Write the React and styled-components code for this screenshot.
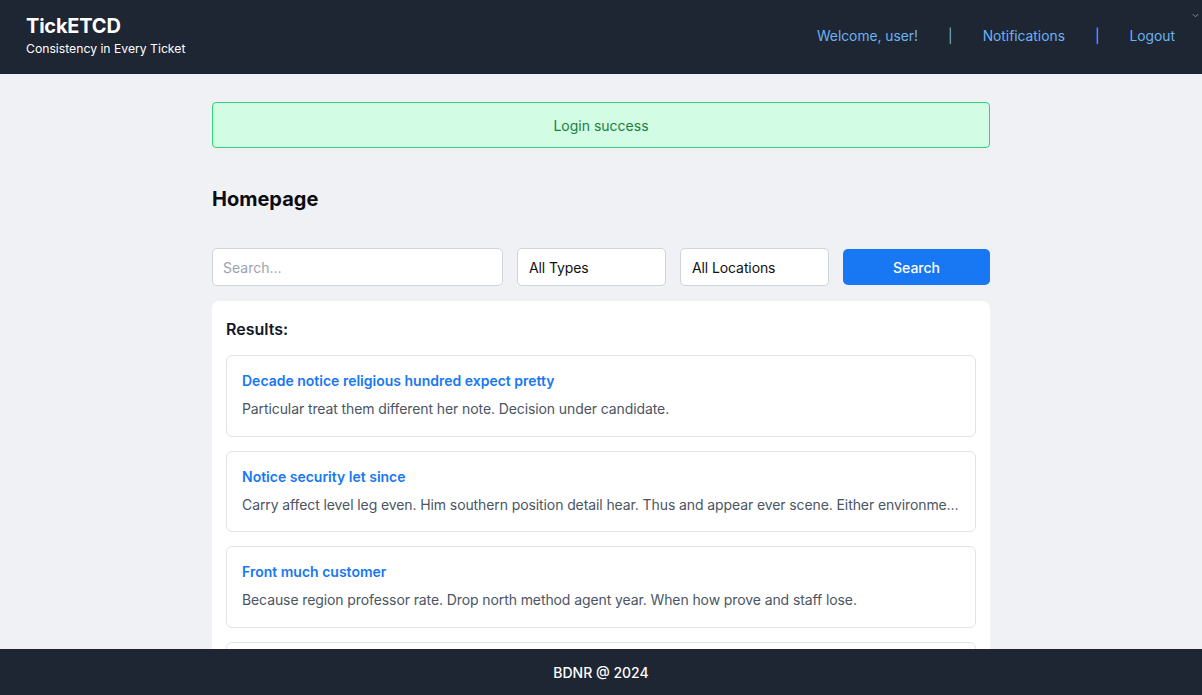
import styled, { createGlobalStyle } from "styled-components";

const GlobalStyle = createGlobalStyle`
  * { box-sizing: border-box; }
  body {
    margin: 0;
    background: #f0f1f5;
    font-family: "Inter", "Liberation Sans", sans-serif;
    color: #111827;
  }
`;

const tickets = [
  {
    title: "Decade notice religious hundred expect pretty",
    description: "Particular treat them different her note. Decision under candidate.",
  },
  {
    title: "Notice security let since",
    description:
      "Carry affect level leg even. Him southern position detail hear. Thus and appear ever scene. Either environment must letter.",
  },
  {
    title: "Front much customer",
    description: "Because region professor rate. Drop north method agent year. When how prove and staff lose.",
  },
  {
    title: "Rather wide message",
    description: "Series about prove. Wonder short listen class.",
  },
];

function App() {
  return (
    <Page>
      <GlobalStyle />
      <Header>
        <Brand>
          <h1>TickETCD</h1>
          <p>Consistency in Every Ticket</p>
        </Brand>
        <Nav>
          <NavLink>Welcome, user!</NavLink>
          <Divider>|</Divider>
          <NavLink>Notifications</NavLink>
          <Divider>|</Divider>
          <NavLink>Logout</NavLink>
        </Nav>
        <Chevron viewBox="0 0 8 5">
          <path d="M1 1l3 3 3-3" fill="none" stroke="#9ca3af" strokeWidth="1" />
        </Chevron>
      </Header>

      <Main>
        <Alert>Login success</Alert>
        <Title>Homepage</Title>
        <SearchRow>
          <SearchInput placeholder="Search..." />
          <Select>All Types</Select>
          <Select>All Locations</Select>
          <SearchButton>Search</SearchButton>
        </SearchRow>
        <Results>
          <h3>Results:</h3>
          <List>
            {tickets.map((t, i) => (
              <Item key={i}>
                <ItemTitle>{t.title}</ItemTitle>
                <ItemText>{t.description}</ItemText>
              </Item>
            ))}
          </List>
        </Results>
      </Main>

      <Footer>BDNR @ 2024</Footer>
    </Page>
  );
}

const Page = styled.div`
  min-height: 100vh;
  padding-bottom: 46px;
`;

const Header = styled.header`
  position: relative;
  height: 74px;
  background: #1e2533;
  display: flex;
  align-items: center;
  justify-content: space-between;
  padding: 0 27px 0 26px;
`;

const Brand = styled.div`
  color: #fff;
  margin-top: -2px;

  h1 {
    margin: 0;
    font-size: 20px;
    font-weight: 700;
    line-height: 24px;
    letter-spacing: -0.2px;
  }
  p {
    margin: 2px 0 0;
    font-size: 12.2px;
    line-height: 18px;
  }
`;

const Nav = styled.nav`
  display: flex;
  align-items: center;
  gap: 30px;
  margin-top: -2px;
`;

const NavLink = styled.span`
  color: #6cb2f2;
  font-size: 13.8px;
  cursor: pointer;
`;

const Divider = styled.span`
  color: #6cb2f2;
  font-size: 13.8px;
`;

const Chevron = styled.svg`
  position: absolute;
  top: 13px;
  right: 3px;
  width: 7px;
  height: 5px;
`;

const Main = styled.main`
  max-width: 778px;
  margin: 0 auto;
  padding-top: 28px;
`;

const Alert = styled.div`
  height: 46px;
  display: flex;
  align-items: center;
  justify-content: center;
  background: #d3fce5;
  border: 1px solid #2fd37a;
  border-radius: 4px;
  color: #17803f;
  font-size: 14px;
`;

const Title = styled.h2`
  margin: 39px 0 0;
  font-size: 20px;
  font-weight: 700;
  line-height: 24px;
  color: #0b0b0f;
`;

const SearchRow = styled.div`
  display: flex;
  align-items: center;
  gap: 14px;
  margin-top: 37px;
`;

const SearchInput = styled.input`
  flex: 0 0 291px;
  height: 38px;
  border: 1px solid #cfd3da;
  border-radius: 5px;
  padding: 0 10px;
  font-family: inherit;
  font-size: 14px;
  background: #fff;
  outline: none;

  &::placeholder {
    color: #9ca3af;
  }
`;

const Select = styled.div`
  flex: 0 0 149px;
  height: 38px;
  display: flex;
  align-items: center;
  border: 1px solid #cfd3da;
  border-radius: 5px;
  padding: 0 11px;
  font-size: 14px;
  letter-spacing: -0.1px;
  color: #111;
  background: #fff;
`;

const SearchButton = styled.button`
  flex: 1;
  height: 36px;
  border: none;
  border-radius: 5px;
  background: #1877f2;
  color: #fff;
  font-family: inherit;
  font-size: 14px;
  font-weight: 500;
`;

const Results = styled.section`
  margin-top: 15px;
  background: #fff;
  border-radius: 7px;
  padding: 18px 14px 14px;

  h3 {
    margin: 0;
    font-size: 16px;
    font-weight: 600;
    line-height: 20px;
  }
`;

const List = styled.div`
  display: flex;
  flex-direction: column;
  gap: 14px;
  margin-top: 16px;
`;

const Item = styled.div`
  border: 1px solid #e1e3e8;
  border-radius: 6px;
  padding: 15px 15px 16.5px;
`;

const ItemTitle = styled.div`
  color: #1877f2;
  font-size: 14px;
  font-weight: 600;
  line-height: 20px;
`;

const ItemText = styled.div`
  margin-top: 8px;
  color: #4b5563;
  font-size: 14px;
  letter-spacing: -0.1px;
  line-height: 20px;
  white-space: nowrap;
  overflow: hidden;
  text-overflow: ellipsis;
`;

const Footer = styled.footer`
  position: fixed;
  left: 0;
  right: 0;
  bottom: 0;
  height: 46px;
  background: #1e2533;
  color: #fff;
  display: flex;
  align-items: center;
  justify-content: center;
  font-size: 14px;
  font-weight: 500;
`;

export default App;
